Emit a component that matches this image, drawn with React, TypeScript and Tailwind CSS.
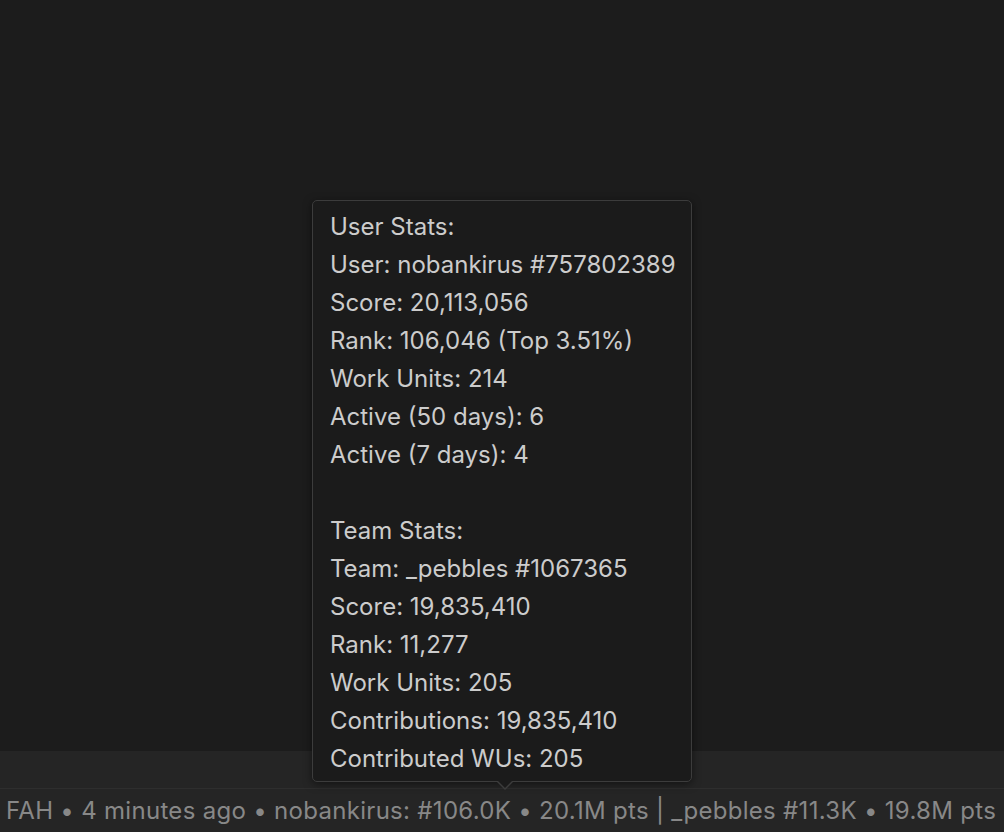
const userLines = [
  "User Stats:",
  "User: nobankirus #757802389",
  "Score: 20,113,056",
  "Rank: 106,046 (Top 3.51%)",
  "Work Units: 214",
  "Active (50 days): 6",
  "Active (7 days): 4",
];

const teamLines = [
  "Team Stats:",
  "Team: _pebbles #1067365",
  "Score: 19,835,410",
  "Rank: 11,277",
  "Work Units: 205",
  "Contributions: 19,835,410",
  "Contributed WUs: 205",
];

export default function App() {
  return (
    <div
      className="flex h-[832px] w-[1004px] flex-col overflow-hidden bg-[#1c1c1c]"
      style={{ fontFamily: "Inter, 'Noto Sans', sans-serif" }}
    >
      <div className="flex-1" />
      <div className="h-[37px] bg-[#252525]" />
      <div className="relative flex h-[44px] items-center border-t border-[#2e2e2e] bg-[#252525] pl-[6px] text-[24px] tracking-[0.3px] whitespace-nowrap text-[#888888]">
        FAH • 4 minutes ago • nobankirus: #106.0K • 20.1M pts | _pebbles #11.3K • 19.8M pts
        <div className="absolute bottom-[50px] left-[312px] w-[380px] rounded-[5px] border border-[#3c3c3c] bg-[#1b1b1b] px-[17px] pt-[7px] pb-[3px] text-[24px] leading-[38px] tracking-normal text-[#cccccc] shadow-[0_2px_8px_rgba(0,0,0,0.5)]">
          {userLines.map((l) => (
            <div key={l}>{l}</div>
          ))}
          <div className="h-[38px]" />
          {teamLines.map((l) => (
            <div key={l}>{l}</div>
          ))}
          <div className="absolute -bottom-[9px] left-[183px] h-0 w-0 border-x-[9px] border-t-[9px] border-x-transparent border-t-[#3c3c3c]" />
          <div className="absolute -bottom-[7px] left-[184px] h-0 w-0 border-x-[8px] border-t-[8px] border-x-transparent border-t-[#1b1b1b]" />
        </div>
      </div>
    </div>
  );
}
